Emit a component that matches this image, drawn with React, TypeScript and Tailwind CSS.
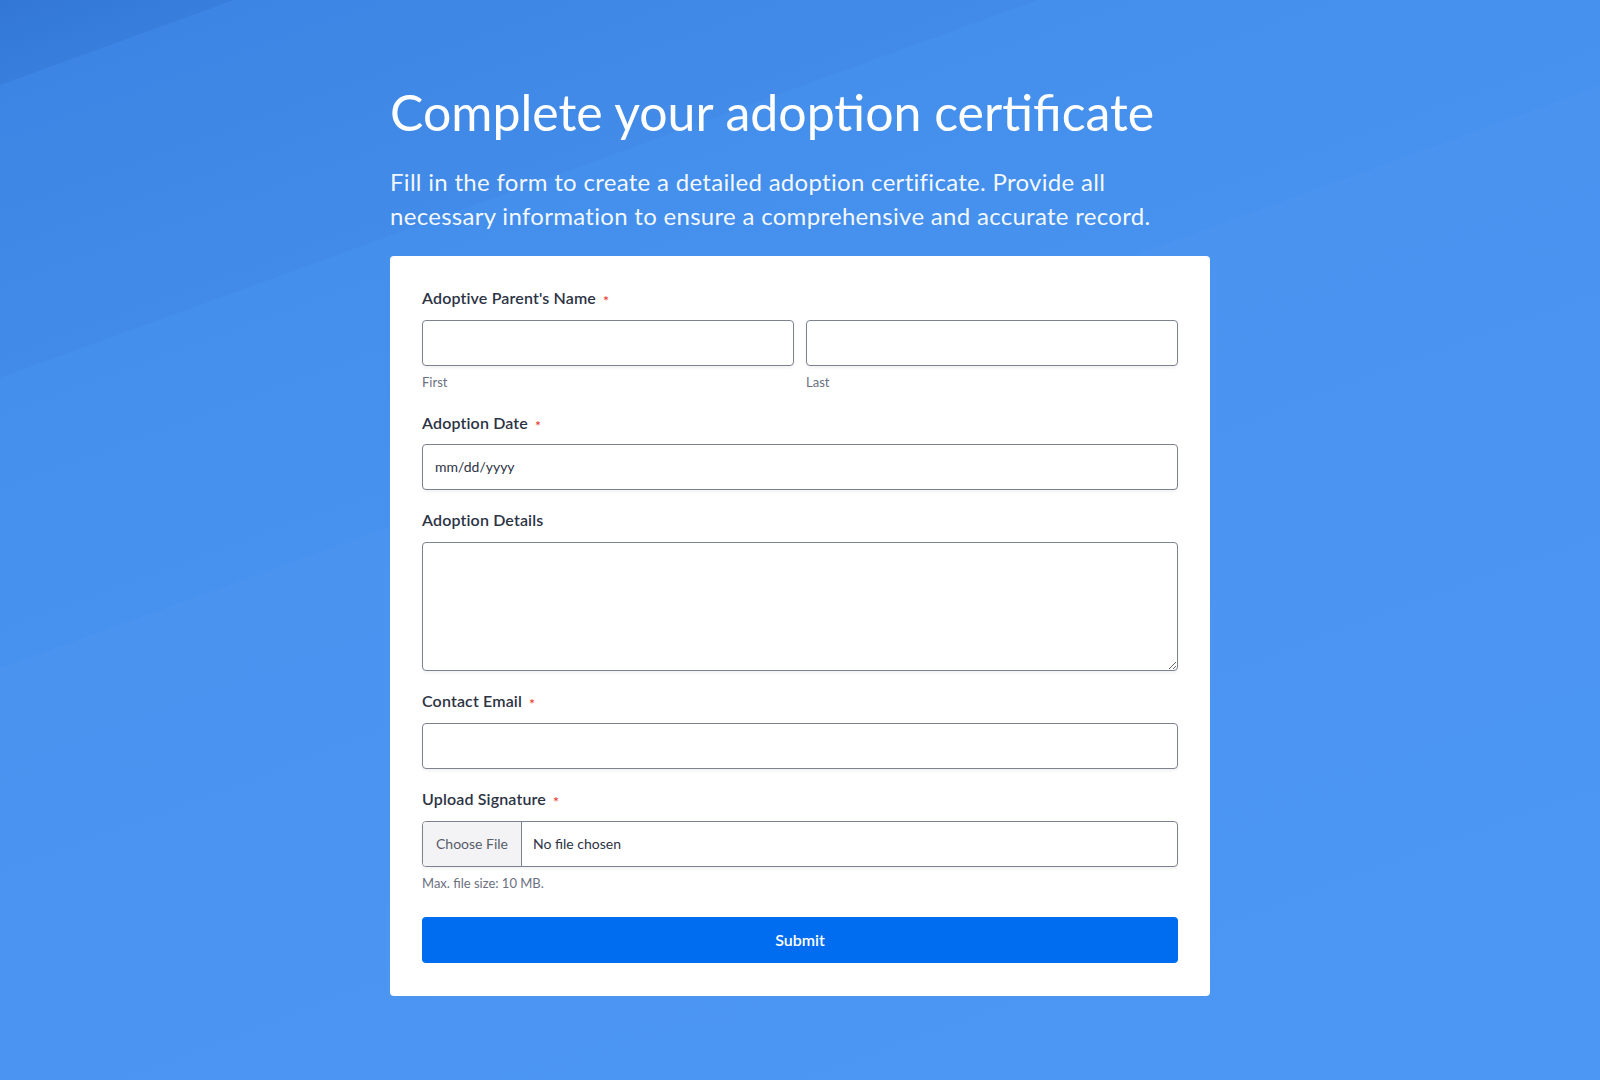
import { useState } from "react";

const labelCls = "block text-[16px] leading-[24px] font-semibold text-[#2c3345] tracking-[0.15px]";
const inputCls =
  "block w-full h-[46px] rounded-[4px] border border-[#7d828e] bg-white px-[12px] text-[14px] text-[#2c3345] shadow-[0_2px_3px_rgba(35,40,60,0.06)] outline-none focus:border-[#0066ef]";

function Required() {
  return (
    <span className="ml-[7px] inline-block translate-y-[2px] text-[14px] leading-none text-[#e8402f]">
      *
    </span>
  );
}

function Sublabel({ children }: { children: React.ReactNode }) {
  return <p className="mt-[7px] text-[13px] leading-[19.5px] text-[#6b7080]">{children}</p>;
}

export default function App() {
  const [fileName, setFileName] = useState("");

  return (
    <div
      className="min-h-[1080px] w-full bg-[linear-gradient(160deg,#3277d6_0px,#387edd_80px,#3d85e4_80px,#428be8_355px,#448fec_355px,#4792ee_628px,#4a94f0_628px,#4c97f3_100%)]"
      style={{ fontFamily: "Lato, 'Noto Sans', sans-serif" }}
    >
      <div className="mx-auto w-[820px] pt-[82px] pb-[84px]">
        <h1 className="text-[50px] leading-[60px] font-normal text-white">
          Complete your adoption certificate
        </h1>
        <p className="mt-[23px] max-w-[775px] text-[24px] leading-[33.6px] tracking-[0.3px] text-white/95">
          Fill in the form to create a detailed adoption certificate. Provide all necessary
          information to ensure a comprehensive and accurate record.
        </p>

        <form
          className="mt-[24px] flex flex-col gap-[18px] rounded-[4px] bg-white px-[32px] pt-[30px] pb-[33px]"
          onSubmit={(e) => e.preventDefault()}
        >
          <div>
            <label className={labelCls}>
              Adoptive Parent's Name
              <Required />
            </label>
            <div className="mt-[10px] grid grid-cols-2 gap-[12px]">
              <div>
                <input type="text" className={inputCls} />
                <Sublabel>First</Sublabel>
              </div>
              <div>
                <input type="text" className={inputCls} />
                <Sublabel>Last</Sublabel>
              </div>
            </div>
          </div>

          <div>
            <label className={labelCls}>
              Adoption Date
              <Required />
            </label>
            <input
              type="text"
              placeholder="mm/dd/yyyy"
              className={`${inputCls} mt-[9px] placeholder:text-[#2c3345]`}
            />
          </div>

          <div>
            <label className={labelCls}>Adoption Details</label>
            <textarea
              className="mt-[10px] block h-[129px] w-full resize-y rounded-[4px] border border-[#7d828e] bg-white px-[12px] py-[10px] text-[14px] text-[#2c3345] shadow-[0_2px_3px_rgba(35,40,60,0.06)] outline-none"
            />
          </div>

          <div>
            <label className={labelCls}>
              Contact Email
              <Required />
            </label>
            <input type="email" className={`${inputCls} mt-[10px]`} />
          </div>

          <div>
            <label className={labelCls}>
              Upload Signature
              <Required />
            </label>
            <label className="mt-[10px] flex h-[46px] w-full cursor-pointer overflow-hidden rounded-[4px] border border-[#7d828e] bg-white shadow-[0_2px_3px_rgba(35,40,60,0.06)]">
              <input
                type="file"
                className="hidden"
                onChange={(e) => setFileName(e.target.files?.[0]?.name ?? "")}
              />
              <span className="flex w-[99px] items-center justify-center border-r border-[#7d828e] bg-[#f3f3f5] text-[14px] text-[#575c69]">
                Choose File
              </span>
              <span className="flex items-center pl-[11px] text-[14px] text-[#2c3345]">
                {fileName || "No file chosen"}
              </span>
            </label>
            <Sublabel>Max. file size: 10 MB.</Sublabel>
          </div>

          <button
            type="submit"
            className="mt-[6px] h-[46px] w-full rounded-[4px] bg-[#006cf0] text-[16px] font-semibold text-white hover:bg-[#005fd6]"
          >
            Submit
          </button>
        </form>
      </div>
    </div>
  );
}
